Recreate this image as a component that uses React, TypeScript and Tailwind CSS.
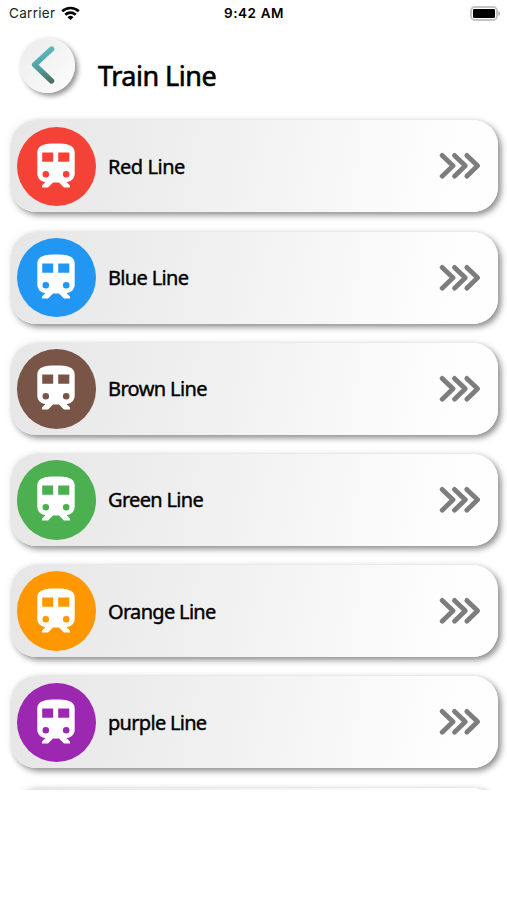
type TrainLine = {
  name: string;
  color: string;
  tracking: string;
};

const LINES: TrainLine[] = [
  { name: "Red Line", color: "bg-[#f44336]", tracking: "tracking-[-0.45px]" },
  { name: "Blue Line", color: "bg-[#2196f3]", tracking: "tracking-[-0.65px]" },
  { name: "Brown Line", color: "bg-[#795548]", tracking: "tracking-[-0.62px]" },
  { name: "Green Line", color: "bg-[#4caf50]", tracking: "tracking-[-0.68px]" },
  { name: "Orange Line", color: "bg-[#ff9800]", tracking: "tracking-[-0.68px]" },
  { name: "purple Line", color: "bg-[#9c27b0]", tracking: "tracking-[-0.7px]" },
];

const CARD =
  "h-[92px] shrink-0 rounded-[25px] bg-[linear-gradient(100deg,#e6e6e6_0%,#f2f2f2_48%,#fefefe_90%)] shadow-[3px_3px_6px_rgba(0,0,0,0.46),-2px_-2px_8px_rgba(0,0,0,0.03)]";

function StatusBar() {
  return (
    <div className="grid h-[27px] grid-cols-3 items-center pl-[9px] pr-[6px] font-['Inter',sans-serif] text-[13.5px] text-[#222]">
      <div className="flex items-center gap-[6px]">
        <span className="tracking-[0.3px]">Carrier</span>
        <svg width="19" height="15" viewBox="0 0 19 15" fill="none" stroke="#000" strokeWidth="2.6">
          <path d="M1.2 5.3a12 12 0 0 1 16.6 0" />
          <path d="M4.3 8.7a7.6 7.6 0 0 1 10.4 0" />
          <path d="M9.5 14 6.5 11.2a4.3 4.3 0 0 1 6 0Z" fill="#000" stroke="none" />
        </svg>
      </div>
      <span className="-ml-[2px] text-center font-semibold tracking-[0.6px] text-black">9:42 AM</span>
      <svg className="justify-self-end" width="31" height="15" viewBox="0 0 31 15">
        <rect x="1" y="1" width="26" height="13" rx="3.8" fill="#fff" stroke="#c4c4c4" strokeWidth="2" />
        <rect x="3" y="3" width="22" height="9" rx="1.2" fill="#000" />
        <path d="M28.3 5.2c2.4.7 2.4 3.9 0 4.6Z" fill="#b0b0b0" />
      </svg>
    </div>
  );
}

function Header() {
  return (
    <header className="flex h-[86px] items-start pl-[20px] pt-[11px]">
      <button
        aria-label="Back"
        className="size-[55px] rounded-full bg-[linear-gradient(135deg,#ebebeb,#fdfdfd)] shadow-[3px_3px_5px_rgba(0,0,0,0.42),-1px_-1px_4px_rgba(0,0,0,0.04)]"
      >
        <svg width="55" height="55" viewBox="0 0 55 55" fill="none">
          <defs>
            <linearGradient id="back" gradientUnits="userSpaceOnUse" x1="24" y1="9" x2="32" y2="45">
              <stop offset="0" stopColor="#64b8b9" />
              <stop offset="0.5" stopColor="#4fa3a5" />
              <stop offset="1" stopColor="#4c695f" />
            </linearGradient>
          </defs>
          <path
            d="M31.6 11 14.6 26.8 31.6 43"
            stroke="url(#back)"
            strokeWidth="5.4"
            strokeLinecap="round"
            strokeLinejoin="round"
          />
        </svg>
      </button>
      <h1 className="ml-[23px] mt-[18px] text-[27px] leading-[40px] tracking-[-0.5px] [-webkit-text-stroke:0.6px_#000]">
        Train Line
      </h1>
    </header>
  );
}

function TrainIcon() {
  return (
    <svg width="38" height="45" viewBox="0 0 38 45" fill="#fff">
      <path
        fillRule="evenodd"
        d="M19 0.5C8 0.5 0.3 2 0.3 9.5V30.5C0.3 35.2 3.8 39 8.5 39L5 42.6V44.4H11L16 39.4H22L27 44.4H33V42.6L29.5 39C34.2 39 37.7 35.2 37.7 30.5V9.5C37.7 2 30 0.5 19 0.5ZM5.2 9.6H16.2V18.8H5.2ZM21.2 9.6H32.3V18.8H21.2ZM8.8 27.9a3.3 3.3 0 1 1 0 6.6 3.3 3.3 0 0 1 0-6.6ZM29.2 27.9a3.3 3.3 0 1 1 0 6.6 3.3 3.3 0 0 1 0-6.6Z"
      />
    </svg>
  );
}

function TripleChevron() {
  return (
    <svg
      width="42"
      height="28"
      viewBox="0 0 42 28"
      fill="none"
      stroke="#7d7d7d"
      strokeWidth="4.8"
      strokeLinecap="round"
      strokeLinejoin="round"
    >
      <path d="m3.2 3.4 10.8 10.4L3.2 24.2" />
      <path d="m15.5 3.4 10.8 10.4-10.8 10.4" />
      <path d="m27.8 3.4 10.8 10.4-10.8 10.4" />
    </svg>
  );
}

function LineCard({ line }: { line: TrainLine }) {
  return (
    <li className={`flex items-center pl-[6px] pr-[16.5px] ${CARD}`}>
      <div className={`flex size-[79.5px] items-center justify-center rounded-full pb-[2px] ${line.color}`}>
        <TrainIcon />
      </div>
      <span className={`ml-[12px] mt-px flex-1 text-[20px] leading-[28px] [-webkit-text-stroke:0.4px_#000] ${line.tracking}`}>
        {line.name}
      </span>
      <TripleChevron />
    </li>
  );
}

export default function App() {
  return (
    <main className="h-[900px] w-[507px] overflow-hidden bg-white font-['Noto_Sans',sans-serif] text-black">
      <StatusBar />
      <Header />
      <ul className="flex h-[676.5px] flex-col gap-[19.2px] overflow-hidden pl-[10.5px] pr-[9.5px] pt-[7.4px]">
        {LINES.map((line) => (
          <LineCard key={line.name} line={line} />
        ))}
        <li className={CARD} />
      </ul>
    </main>
  );
}
